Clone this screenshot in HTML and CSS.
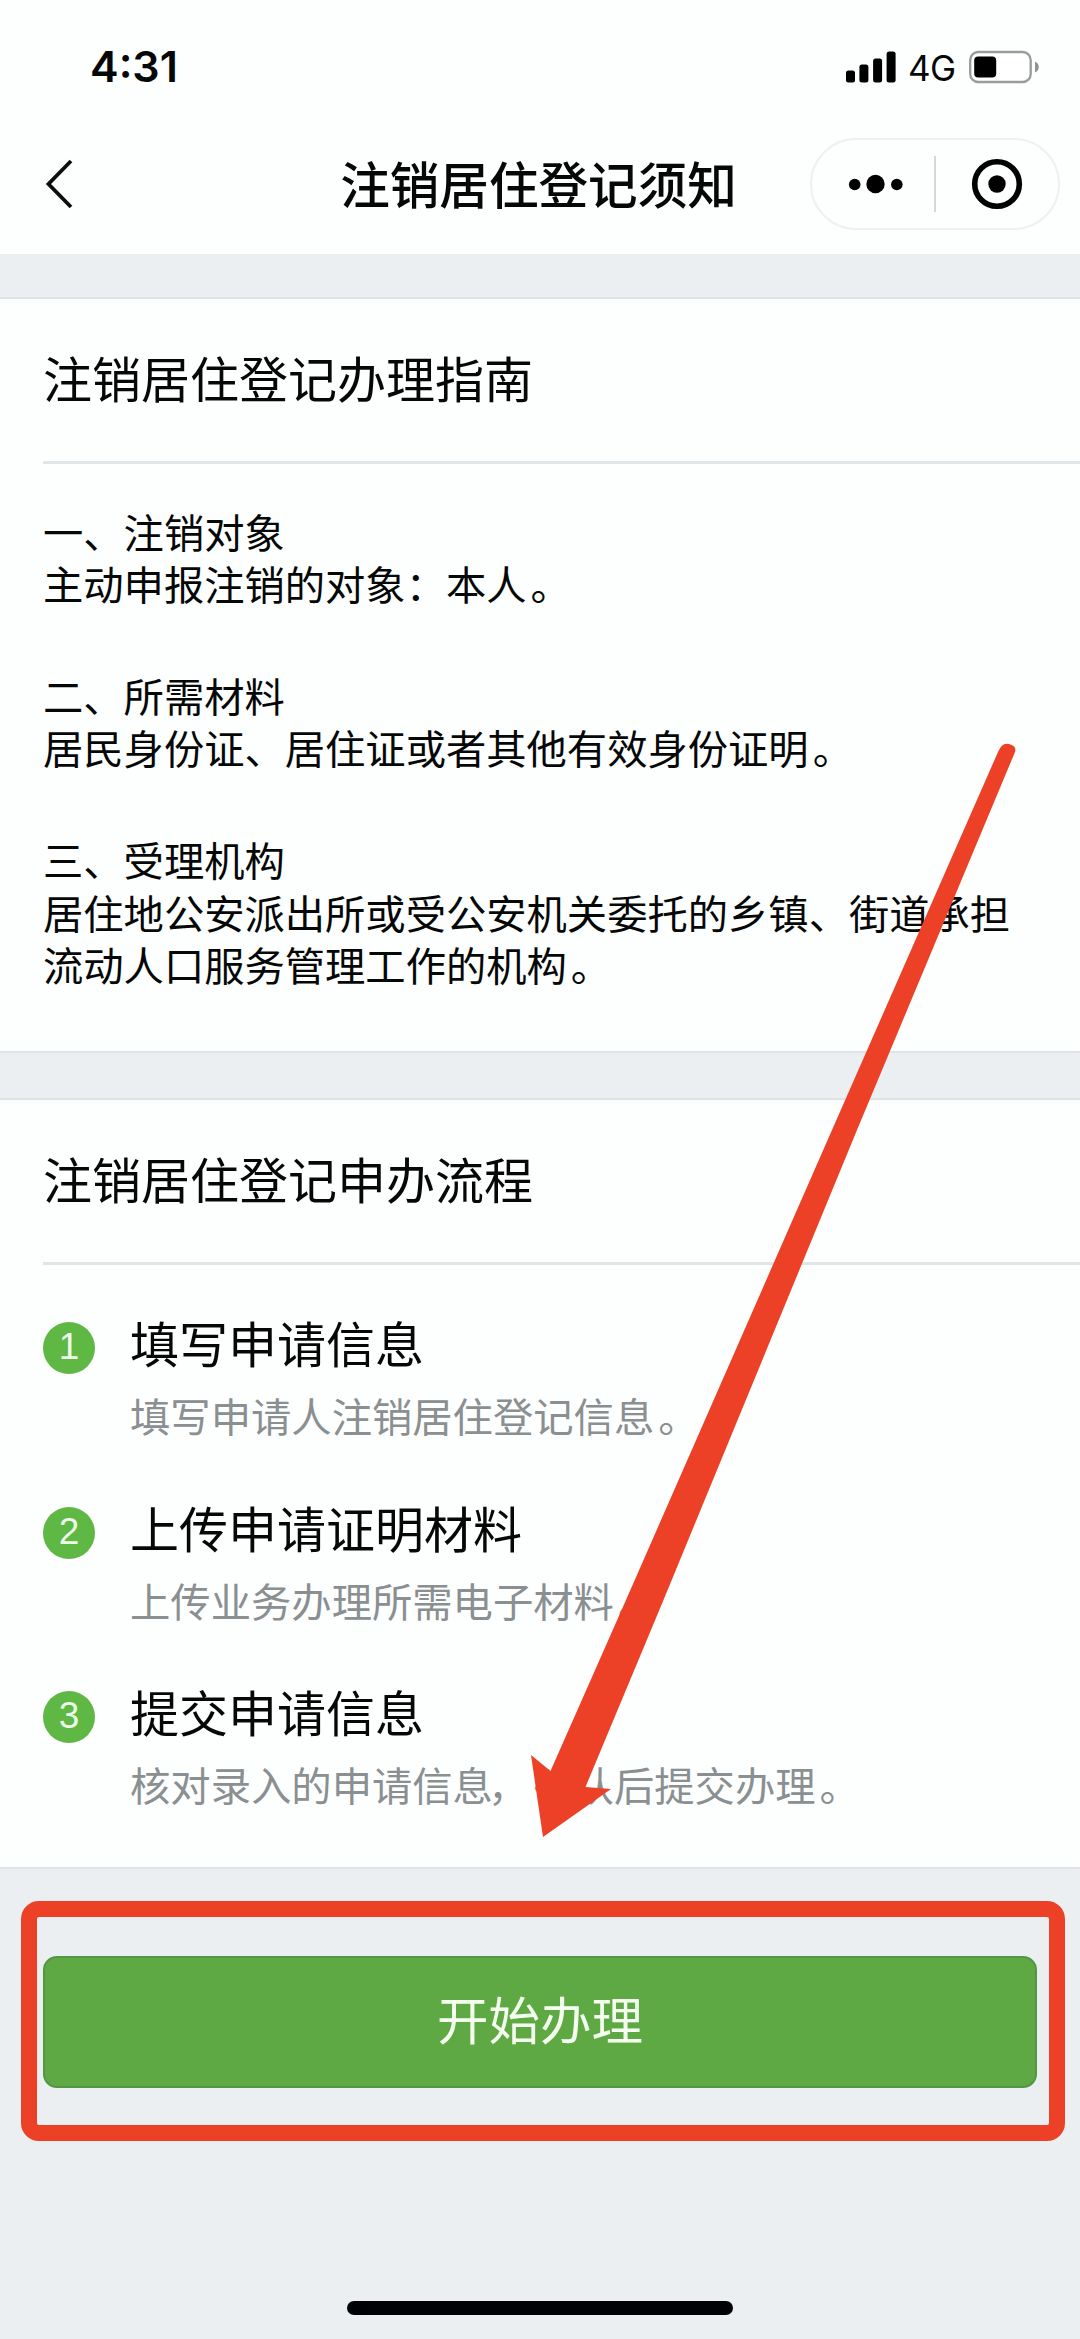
FILE: index.html
```html
<!DOCTYPE html>
<html lang="zh-CN">
<head>
<meta charset="utf-8">
<title>注销居住登记须知</title>
<link rel="stylesheet" href="styles.css">
</head>
<body>
<div class="screen">
  <header class="top">
    <div class="status">
      <span class="time">4:31</span>
      <div class="indicators">
        <svg class="signal" width="50" height="32" viewBox="0 0 50 32">
          <rect x="0" y="19.500" width="9" height="12" rx="2.500"/>
          <rect x="13.400" y="13.500" width="9" height="18" rx="2.500"/>
          <rect x="27.100" y="7.500" width="9" height="24" rx="2.500"/>
          <rect x="40.600" y="0.500" width="9" height="31" rx="2.500"/>
        </svg>
        <span class="network">4G</span>
        <svg class="battery" width="71" height="34" viewBox="0 0 71 34">
          <rect x="1.200" y="2" width="60.500" height="30" rx="8" fill="#fff" stroke="#999c9c" stroke-width="2.300"/>
          <rect x="5.200" y="6.500" width="22" height="21" rx="4" fill="#000"/>
          <path d="M66 11.500c5 2 5 9 0 11z" fill="#8f9292"/>
        </svg>
      </div>
    </div>
    <nav class="nav">
      <svg class="back" width="30" height="52" viewBox="0 0 30 52"><path d="M26 3 3.500 26 26 49" fill="none" stroke="#0c0e0e" stroke-width="3.800"/></svg>
      <h1 class="nav-title">注销居住登记须知</h1>
      <div class="capsule">
        <svg width="60" height="30" viewBox="0 0 60 30"><circle cx="8.700" cy="15.500" r="5.800"/><circle cx="29.500" cy="15" r="9.200"/><circle cx="50.800" cy="15.500" r="5.800"/></svg>
        <span class="capsule-line"></span>
        <svg width="54" height="54" viewBox="0 0 54 54"><circle cx="27" cy="27" r="22.300" fill="none" stroke="#000" stroke-width="5.600"/><circle cx="27" cy="27" r="8.700"/></svg>
      </div>
    </nav>
  </header>

  <section class="card">
    <h2 class="card-title">注销居住登记办理指南</h2>
    <div class="guide">
      <p>一、注销对象<br>主动申报注销的对象：本人<span class="stop">。</span></p>
      <p>二、所需材料<br>居民身份证、居住证或者其他有效身份证明<span class="stop">。</span></p>
      <p>三、受理机构<br>居住地公安派出所或受公安机关委托的乡镇、街道承担<br>流动人口服务管理工作的机构<span class="stop">。</span></p>
    </div>
  </section>

  <section class="card card-flow">
    <h2 class="card-title">注销居住登记申办流程</h2>
    <ol class="steps">
      <li class="step">
        <span class="step-num">1</span>
        <div><h3>填写申请信息</h3><p>填写申请人注销居住登记信息<span class="stop">。</span></p></div>
      </li>
      <li class="step">
        <span class="step-num">2</span>
        <div><h3>上传申请证明材料</h3><p>上传业务办理所需电子材料<span class="stop">。</span></p></div>
      </li>
      <li class="step">
        <span class="step-num">3</span>
        <div><h3>提交申请信息</h3><p>核对录入的申请信息<span class="comma">，</span>确认后提交办理<span class="stop">。</span></p></div>
      </li>
    </ol>
  </section>

  <div class="action">
    <button class="start" type="button">开始办理</button>
    <div class="highlight"></div>
  </div>
  <div class="home-bar"></div>

  <svg class="arrow" width="500" height="1100" viewBox="525 740 500 1100">
    <path d="M998 752Q1002 742 1009 744Q1017 746 1015 752L857 1130L663.500 1600L585.500 1787L611 1789L543 1837L531 1755L550.500 1771L626 1600L832 1130Z" fill="#ec4126"/>
  </svg>
</div>
</body>
</html>
```
FILE: styles.css
```css
* {
  box-sizing: border-box;
  margin: 0;
  padding: 0;
}

body {
  background: #ebeff2;
  color: #060808;
  font-family: "Noto Sans CJK SC", sans-serif;
}

.screen {
  position: relative;
  display: flex;
  flex-direction: column;
  width: 1080px;
  height: 2339px;
  overflow: hidden;
}

.top {
  background: #fdfefe;
}

.status {
  display: flex;
  align-items: center;
  justify-content: space-between;
  height: 114px;
  padding: 19px 40px 0 90px;
}

.time {
  padding-bottom: 2px;
  font: 600 43px/50px Inter, sans-serif;
}

.indicators {
  display: flex;
  align-items: center;
}

.network {
  width: 47px;
  margin: 2px 14px 0 12px;
  font: 400 35px/40px Inter, sans-serif;
  letter-spacing: -0.5px;
}

.nav {
  display: grid;
  grid-template-columns: 247px 1fr 250px;
  align-items: center;
  height: 140px;
  padding: 0 20px 0 20px;
}

.back {
  margin-left: 25px;
}

.nav-title {
  padding-bottom: 5px;
  font-size: 49.6px;
  font-weight: 500;
  line-height: 70px;
  text-align: center;
  white-space: nowrap;
}

.capsule {
  display: flex;
  align-items: center;
  width: 250px;
  height: 92px;
  padding-left: 34px;
  border: 2px solid #edf1f2;
  border-radius: 46px;
}

.capsule-line {
  flex: none;
  width: 1.5px;
  height: 56px;
  margin: 0 34px 0 28px;
  background: #d4d8d8;
}

.capsule svg {
  flex: none;
}

.card {
  margin-top: 43px;
  border-top: 2px solid #dfe3e8;
  border-bottom: 2px solid #dfe3e8;
  background: #fdfefe;
}

.card-flow {
  margin-top: 45px;
}

.card-title {
  height: 165px;
  margin-left: 43px;
  border-bottom: 3px solid #e0e5e8;
  font-size: 49px;
  font-weight: 400;
  line-height: 156px;
}

.guide {
  display: flex;
  flex-direction: column;
  gap: 60px;
  padding: 40.6px 0 61px 43px;
  font-size: 40.3px;
  line-height: 52.2px;
  white-space: nowrap;
}

/* full stops sit slightly apart from the preceding character */
.stop {
  margin-left: 4px;
}

.comma {
  margin: 0 5px 0 -5px;
}

.steps {
  display: flex;
  flex-direction: column;
  gap: 55.5px;
  padding: 47px 0 57px 43px;
  list-style: none;
}

.step {
  display: flex;
  align-items: flex-start;
  gap: 35px;
}

.step-num {
  width: 52px;
  height: 52px;
  margin-top: 10px;
  border-radius: 50%;
  background: #5fb744;
  color: #ecfbe8;
  font: 400 37px/50px "Liberation Sans", sans-serif;
  text-align: center;
}

.step h3 {
  font-size: 49px;
  font-weight: 400;
  line-height: 60px;
}

.step p {
  margin-top: 17px;
  color: #8a8f91;
  font-size: 40.35px;
  line-height: 52px;
}

.action {
  position: relative;
  padding: 87px 43px 0;
}

.start {
  display: block;
  width: 994px;
  height: 132px;
  padding-bottom: 8px;
  border: 2px solid #519743;
  border-radius: 14px;
  background: #5fa944;
  color: #f4fff0;
  font: 400 51.5px/70px "Noto Sans CJK SC", sans-serif;
}

.highlight {
  position: absolute;
  top: 32px;
  left: 21px;
  width: 1044px;
  height: 240px;
  border: 16px solid #ec4126;
  border-radius: 18px;
}

.home-bar {
  width: 386px;
  height: 14px;
  margin: auto auto 24px 347px;
  border-radius: 7px;
  background: #000105;
}

.arrow {
  position: absolute;
  top: 740px;
  left: 525px;
}
```
